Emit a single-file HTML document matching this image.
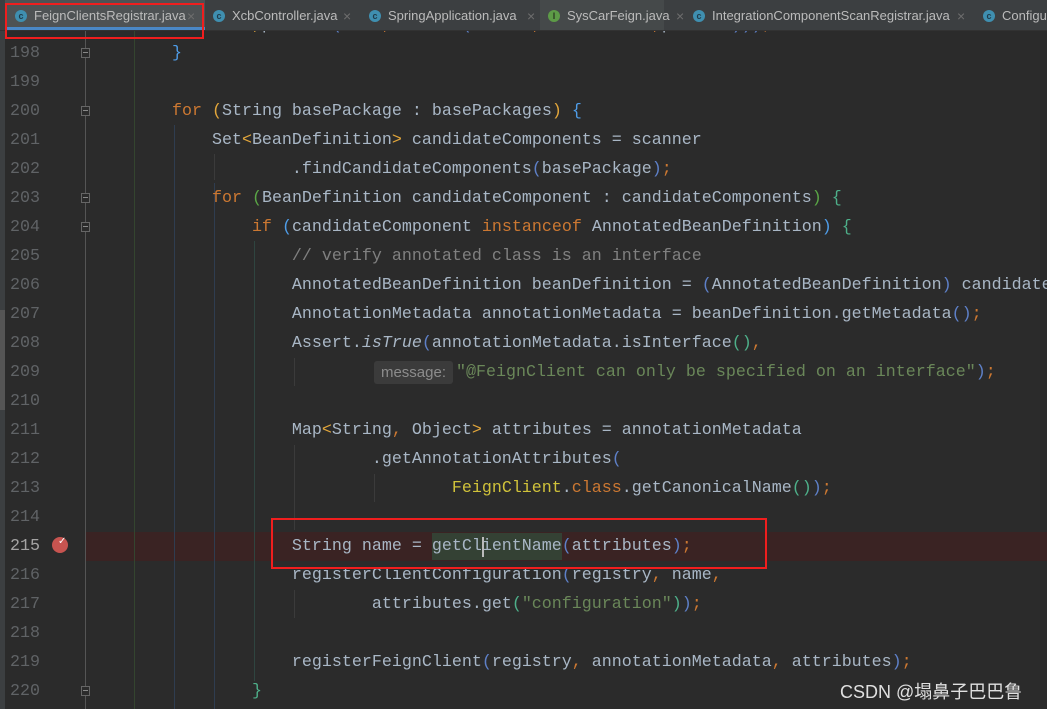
<!DOCTYPE html>
<html><head><meta charset="utf-8"><style>
body{margin:0;width:1047px;height:709px;overflow:hidden;background:#2b2b2b;position:relative;font-family:"Liberation Mono",monospace}
#wrap{position:absolute;left:0;top:0;width:1047px;height:709px;overflow:hidden}
.tabs{position:absolute;left:0;top:0;width:1047px;height:30px;background:#3c3f41;border-bottom:1px solid #323232;font-family:"Liberation Sans",sans-serif;font-size:13px;color:#bbbbbb;overflow:hidden}
.tab{position:absolute;top:0;height:30px;line-height:32px;white-space:nowrap}
.ic{position:absolute;top:10px;width:12px;height:12px;border-radius:50%;background:#3f8fb0;color:#1e3b4a;font-size:9px;line-height:12px;text-align:center;font-weight:bold}
.x{color:#6e6e6e;font-size:14px}
.ln{position:absolute;left:0;width:40px;text-align:right;color:#606366;font-size:16.67px;line-height:29px}
.cl{position:absolute;white-space:pre;font-size:16.67px;line-height:29px;color:#a9b7c6}
.k{color:#cc7832}.s{color:#6a8759}.c{color:#808080}.y{color:#ffc66d}.b{color:#5e80c8}.g{color:#4eb08a}.o{color:#e2a63b}.i{font-style:italic}.fc{color:#d0c23a}
.guide{position:absolute;width:1px;background:#3b3b3b}
.fold{position:absolute;left:81px;width:9px;height:10px;border:1px solid #666;background:#2b2b2b;box-sizing:border-box}
.fold:after{content:"";position:absolute;left:1px;top:3px;width:5px;height:1px;background:#888}
</style></head><body><div id="wrap">
<div style="position:absolute;left:0;top:30px;width:5px;height:679px;background:#3c3f41"></div>
<div style="position:absolute;left:0;top:310px;width:5px;height:100px;background:#555"></div>
<div style="position:absolute;left:85px;top:30px;width:1px;height:679px;background:#555"></div>
<div style="position:absolute;left:86px;top:532px;width:961px;height:29px;background:#3a2323"></div>
<div style="position:absolute;left:432px;top:533px;width:130px;height:27px;background:#344134"></div>
<div class="guide" style="left:134px;top:30px;height:679px;background:#34452f"></div>
<div class="guide" style="left:174px;top:125px;height:584px;background:#2f3d50"></div>
<div class="guide" style="left:214px;top:183px;height:526px;background:#2f3d50"></div>
<div class="guide" style="left:254px;top:241px;height:440px;background:#2f4540"></div>
<div class="guide" style="left:214px;top:154px;height:26px"></div>
<div class="guide" style="left:294px;top:358px;height:28px"></div>
<div class="guide" style="left:294px;top:445px;height:85px"></div>
<div class="guide" style="left:374px;top:474px;height:28px"></div>
<div class="guide" style="left:294px;top:590px;height:28px"></div>
<div class="fold" style="top:48px"></div>
<div class="fold" style="top:106px"></div>
<div class="fold" style="top:193px"></div>
<div class="fold" style="top:222px"></div>
<div class="fold" style="top:686px"></div>
<div style="position:absolute;left:52px;top:537px;width:16px;height:16px;border-radius:50%;background:#c75450"></div>
<div style="position:absolute;left:58px;top:536px;color:#fff;font-size:10px;font-family:'DejaVu Sans'">✓</div>

<div class="ln" style="top:39px">198</div>
<div class="ln" style="top:68px">199</div>
<div class="ln" style="top:97px">200</div>
<div class="ln" style="top:126px">201</div>
<div class="ln" style="top:155px">202</div>
<div class="ln" style="top:184px">203</div>
<div class="ln" style="top:213px">204</div>
<div class="ln" style="top:242px">205</div>
<div class="ln" style="top:271px">206</div>
<div class="ln" style="top:300px">207</div>
<div class="ln" style="top:329px">208</div>
<div class="ln" style="top:358px">209</div>
<div class="ln" style="top:387px">210</div>
<div class="ln" style="top:416px">211</div>
<div class="ln" style="top:445px">212</div>
<div class="ln" style="top:474px">213</div>
<div class="ln" style="top:503px">214</div>
<div class="ln" style="top:532px;color:#a4a3a3">215</div>
<div class="ln" style="top:561px">216</div>
<div class="ln" style="top:590px">217</div>
<div class="ln" style="top:619px">218</div>
<div class="ln" style="top:648px">219</div>
<div class="ln" style="top:677px">220</div>

<div class="cl" style="left:92px;top:11px">        <span class="k">new</span> Fool<span class="o">,</span>perlcoc<span class="b">(</span>nrra<span class="k">,</span>crasses<span class="b">(</span>rlecor<span class="k">,</span> annotacion<span class="k">,</span>perlcoc<span class="b">)))</span><span class="k">;</span></div>
<div class="cl" style="left:92px;top:39px">        <span style="color:#4f9de8">}</span></div>
<div class="cl" style="left:92px;top:97px">        <span class="k">for</span> <span class="o">(</span>String basePackage : basePackages<span class="o">)</span> <span style="color:#4f9de8">{</span></div>
<div class="cl" style="left:92px;top:126px">            Set<span class="o">&lt;</span>BeanDefinition<span class="o">&gt;</span> candidateComponents = scanner</div>
<div class="cl" style="left:92px;top:155px">                    .findCandidateComponents<span class="b">(</span>basePackage<span class="b">)</span><span class="k">;</span></div>
<div class="cl" style="left:92px;top:184px">            <span class="k">for</span> <span style="color:#5aa646">(</span>BeanDefinition candidateComponent : candidateComponents<span style="color:#5aa646">)</span> <span class="g">{</span></div>
<div class="cl" style="left:92px;top:213px">                <span class="k">if</span> <span style="color:#4f9de8">(</span>candidateComponent <span class="k">instanceof</span> AnnotatedBeanDefinition<span style="color:#4f9de8">)</span> <span class="g">{</span></div>
<div class="cl" style="left:92px;top:242px">                    <span class="c">// verify annotated class is an interface</span></div>
<div class="cl" style="left:92px;top:271px">                    AnnotatedBeanDefinition beanDefinition = <span class="b">(</span>AnnotatedBeanDefinition<span class="b">)</span> candidate</div>
<div class="cl" style="left:92px;top:300px">                    AnnotationMetadata annotationMetadata = beanDefinition.getMetadata<span class="b">()</span><span class="k">;</span></div>
<div class="cl" style="left:92px;top:329px">                    Assert.<span class="i">isTrue</span><span class="b">(</span>annotationMetadata.isInterface<span class="g">()</span><span class="k">,</span></div>
<div style="position:absolute;left:374px;top:361px;width:79px;height:23px;background:#3b3b3b;border-radius:3px;color:#8c8c8c;font-family:'Liberation Sans',sans-serif;font-size:15px;line-height:23px;text-align:center">message:</div>
<div class="cl" style="left:456px;top:358px"><span class="s">"@FeignClient can only be specified on an interface"</span><span class="b">)</span><span class="k">;</span></div>
<div class="cl" style="left:92px;top:416px">                    Map<span class="o">&lt;</span>String<span class="k">,</span> Object<span class="o">&gt;</span> attributes = annotationMetadata</div>
<div class="cl" style="left:92px;top:445px">                            .getAnnotationAttributes<span class="b">(</span></div>
<div class="cl" style="left:92px;top:474px">                                    <span class="fc">FeignClient</span>.<span class="k">class</span>.getCanonicalName<span class="g">()</span><span class="b">)</span><span class="k">;</span></div>
<div class="cl" style="left:92px;top:532px">                    String name = getClientName<span class="b">(</span>attributes<span class="b">)</span><span class="k">;</span></div>
<div style="position:absolute;left:482px;top:537px;width:2px;height:20px;background:#bbb"></div>
<div class="cl" style="left:92px;top:561px">                    registerClientConfiguration<span class="b">(</span>registry<span class="k">,</span> name<span class="k">,</span></div>
<div class="cl" style="left:92px;top:590px">                            attributes.get<span class="g">(</span><span class="s">"configuration"</span><span class="g">)</span><span class="b">)</span><span class="k">;</span></div>
<div class="cl" style="left:92px;top:648px">                    registerFeignClient<span class="b">(</span>registry<span class="k">,</span> annotationMetadata<span class="k">,</span> attributes<span class="b">)</span><span class="k">;</span></div>
<div class="cl" style="left:92px;top:677px">                <span class="g">}</span></div>

<div class="tabs">
 <div class="tab" style="left:5px;width:200px;background:#4e5254;border-bottom:3px solid #4a88c7;box-sizing:border-box"></div>
 <div class="tab" style="left:15px"><span class="ic" style="left:0">c</span><span style="position:absolute;left:19px">FeignClientsRegistrar.java</span><span class="x" style="position:absolute;left:172px">×</span></div>
 <div class="tab" style="left:213px"><span class="ic" style="left:0">c</span><span style="position:absolute;left:19px">XcbController.java</span><span class="x" style="position:absolute;left:130px">×</span></div>
 <div class="tab" style="left:369px"><span class="ic" style="left:0">c</span><span style="position:absolute;left:19px">SpringApplication.java</span></div>
 <div class="tab" style="left:540px;width:124px;background:#45494a"></div>
 <div class="tab" style="left:527px"><span class="x">×</span></div>
 <div class="tab" style="left:548px"><span class="ic" style="left:0;background:#5d9b47;color:#2a3a22">I</span><span style="position:absolute;left:19px">SysCarFeign.java</span><span class="x" style="position:absolute;left:128px">×</span></div>
 <div class="tab" style="left:693px"><span class="ic" style="left:0">c</span><span style="position:absolute;left:19px">IntegrationComponentScanRegistrar.java</span><span class="x" style="position:absolute;left:264px">×</span></div>
 <div class="tab" style="left:983px"><span class="ic" style="left:0">c</span><span style="position:absolute;left:19px">Configu</span></div>
</div>
<div style="position:absolute;left:5px;top:3px;width:195px;height:32px;border:2px solid #f01e1e"></div>
<div style="position:absolute;left:271px;top:518px;width:492px;height:47px;border:2px solid #f01e1e"></div>
<div style="position:absolute;left:840px;top:678px;color:#e0e0e0;font-family:'Liberation Sans','Noto Sans CJK SC',sans-serif;font-size:18px">CSDN @塌鼻子巴巴鲁</div>
</div></body></html>
